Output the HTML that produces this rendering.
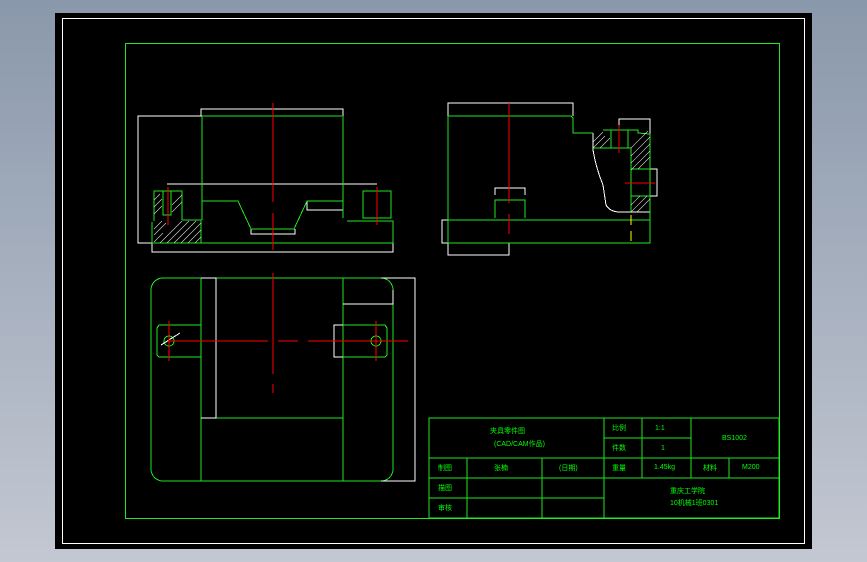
<!DOCTYPE html>
<html><head><meta charset="utf-8"><style>
html,body{margin:0;padding:0;width:867px;height:562px;overflow:hidden;background:linear-gradient(#8a98ab,#c3c8d2);}
svg{position:absolute;left:0;top:0}
text{font-family:"Liberation Sans","Noto Sans CJK SC",sans-serif;font-size:7px;fill:#00ff00;}
</style></head><body>
<svg width="867" height="562" viewBox="0 0 867 562">
<rect x="55" y="13" width="757" height="536" fill="#000"/>
<rect x="62.5" y="18.5" width="742" height="525" fill="none" stroke="#fff" stroke-width="1"/>
<rect x="125.5" y="43.5" width="654" height="475" fill="none" stroke="#1ee81e" stroke-width="1"/>
<g fill="none" stroke-width="1" shape-rendering="crispEdges">
<!-- front view -->
<g stroke="#fff">
<polyline points="201,116 201,109 343,109 343,116"/>
<polyline points="205,116 138,116 138,243 152,243"/>
<line x1="167" y1="184" x2="377" y2="184"/>
<polyline points="152,243 152,252 393,252 393,243"/>
<polyline points="307,201 307,210 343,210 343,201"/>
<polyline points="251,229 251,234 295,234 295,229"/>
</g>
<g stroke="#1ee81e">
<line x1="202" y1="116" x2="342" y2="116"/>
<line x1="202" y1="116" x2="202" y2="220"/>
<line x1="343" y1="116" x2="343" y2="218"/>
<polyline points="182,220 201,220 201,243"/>
<polyline points="154,221 154,191 182,191 182,220"/>
<polyline points="152,222 152,243 393,243 393,221 347,221"/>
<polyline points="202,201 238,201 251,229 294,229 307,201 343,201"/>
<rect x="363" y="191" width="28" height="27"/>
<rect x="163" y="191" width="8" height="24"/>
</g>
<g stroke="#f00"><line x1="273" y1="103" x2="273" y2="202"/><line x1="273" y1="213" x2="273" y2="250"/><line x1="168" y1="187" x2="168" y2="225"/><line x1="377" y1="187" x2="377" y2="225"/></g>
<!-- side view -->
<g stroke="#fff">
<polyline points="448,116 448,103 573,103 573,116"/>
<polyline points="448,220 442,220 442,243 448,243"/>
<polyline points="448,243 448,255 509,255 509,243"/>
<polyline points="495,195 495,188 525,188 525,195"/>
<polyline points="619,130 619,119 650,119 650,134"/>
<polyline points="650,169 657,169 657,196 650,196"/>
<path d="M593,133 L593,150 Q596,168 603,185 L606,205 Q610,212 620,212 L650,212"/>
</g>
<g stroke="#1ee81e">
<polyline points="448,116 571,116 573,118 573,133 593,133"/>
<polyline points="603,130 638,130 638,133 650,134 650,243 448,243 448,116"/>
<line x1="448" y1="220" x2="650" y2="220"/>
<polyline points="495,218 495,200 525,200 525,218"/>
<rect x="611" y="130" width="17" height="18"/>
<line x1="593" y1="148" x2="631" y2="148"/>
<line x1="631" y1="148" x2="631" y2="212"/>
<line x1="631" y1="169" x2="650" y2="169"/>
<line x1="631" y1="196" x2="650" y2="196"/>
</g>
<g stroke="#f00"><line x1="509" y1="103" x2="509" y2="203"/><line x1="509" y1="214" x2="509" y2="234"/><line x1="619" y1="125" x2="619" y2="153"/><line x1="625" y1="183" x2="655" y2="183"/></g>
<g stroke="#ff0"><line x1="631" y1="215" x2="631" y2="225"/><line x1="631" y1="231" x2="631" y2="241"/></g>
<!-- plan view -->
<rect x="151" y="278" width="242" height="203" rx="12" stroke="#1ee81e"/>
<g stroke="#1ee81e">
<line x1="201" y1="278" x2="201" y2="481"/><line x1="343" y1="278" x2="343" y2="481"/>
<line x1="216" y1="418" x2="343" y2="418"/>
<polyline points="201,325 159,325 157,328 157,355 159,357 201,357"/>
<polyline points="343,325 385,325 387,328 387,355 385,357 343,357"/>
<circle cx="169" cy="341" r="5"/><circle cx="376" cy="341" r="5"/>
</g>
<g stroke="#fff">
<polyline points="201,278 216,278 216,418 201,418"/>
<polyline points="343,304 393,304 393,290"/>
<polyline points="343,325 334,325 334,357 343,357"/>
<polyline points="381,278 415,278 415,481 381,481"/>
<line x1="161" y1="345" x2="180" y2="333"/>
</g>
<g stroke="#f00"><line x1="168" y1="341" x2="268" y2="341"/><line x1="278" y1="341" x2="298" y2="341"/><line x1="308" y1="341" x2="408" y2="341"/><line x1="273" y1="273" x2="273" y2="374"/><line x1="273" y1="384" x2="273" y2="393"/><line x1="169" y1="321" x2="169" y2="361"/><line x1="376" y1="321" x2="376" y2="361"/></g>
<!-- title block -->
<g stroke="#1ee81e">
<rect x="429" y="418" width="350" height="100"/>
<line x1="429" y1="458" x2="779" y2="458"/>
<line x1="429" y1="478" x2="779" y2="478"/>
<line x1="429" y1="498" x2="604" y2="498"/>
<line x1="604" y1="438" x2="691" y2="438"/>
<line x1="604" y1="418" x2="604" y2="518"/>
<line x1="642" y1="418" x2="642" y2="478"/>
<line x1="691" y1="418" x2="691" y2="478"/>
<line x1="729" y1="458" x2="729" y2="478"/>
<line x1="467" y1="458" x2="467" y2="518"/>
<line x1="542" y1="458" x2="542" y2="518"/>
</g>
</g>
<!-- hatching -->
<g stroke="#fff" stroke-width="0.6" opacity="0.85">
<path d="M154,235 L166,223 M154,229 L162,221 M160,243 L182,221 M167,243 L189,221 M174,243 L196,221 M181,243 L201,223 M188,243 L201,230 M195,243 L201,237 M154,242 L163,233 M172,205 L182,195 M172,212 L182,202 M154,200 L160,194 M154,207 L162,199 M154,214 L162,206"/>
<path d="M593,142 L603,132 M593,148 L605,136 M600,148 L610,138 M631,148 L648,131 M631,156 L650,137 M631,163 L650,144 M631,170 L650,151 M638,169 L650,157 M631,212 L647,196 M637,212 L650,199 M631,205 L640,196"/>
</g>
<text x="490" y="433">夹具零件图</text>
<text x="494" y="446" font-size="6">(CAD/CAM作品)</text>
<text x="612" y="430">比例</text><text x="655" y="430">1:1</text>
<text x="612" y="450">件数</text><text x="661" y="450">1</text>
<text x="722" y="440">BS1002</text>
<text x="438" y="470">制图</text><text x="494" y="470">张楠</text><text x="559" y="470">(日期)</text>
<text x="612" y="470">重量</text><text x="654" y="469">1.45kg</text>
<text x="703" y="470">材料</text><text x="742" y="469">M200</text>
<text x="438" y="490">描图</text><text x="438" y="510">审核</text>
<text x="670" y="493">重庆工学院</text>
<text x="670" y="505" font-size="6">10机械1班0301</text>
</svg>
</body></html>
